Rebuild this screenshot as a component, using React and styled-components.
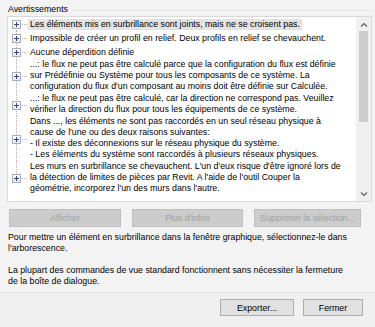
import styled, { createGlobalStyle } from "styled-components";

const GlobalStyle = createGlobalStyle`
  html, body {
    margin: 0;
    padding: 0;
    background: #f0f0f0;
  }
  body {
    font-family: "Liberation Sans", Arial, sans-serif;
    font-size: 8.8px;
    color: #000000;
  }
`;

const Dialog = styled.div`
  width: 375px;
  height: 327px;
  display: flex;
  flex-direction: column;
  background: #f0f0f0;
  overflow: hidden;
`;

const Main = styled.div`
  display: flex;
  flex-direction: column;
  padding: 2px 3px 0 7px;
  height: 293px;
  box-sizing: border-box;
  border-bottom: 1px solid #e0e0e0;
  background: #f3f3f3;
`;

const GroupTitle = styled.div`
  display: flex;
  align-items: center;
  gap: 4px;
  padding-left: 1px;
  height: 14px;
  line-height: 11px;
  &::after {
    content: "";
    flex: 1;
    border-top: 1px solid #e2e2e2;
    margin-top: 2px;
  }
`;

const ListBox = styled.div`
  display: flex;
  height: 186px;
  background: #ffffff;
  border: 1px solid #d9d9d9;
  box-sizing: border-box;
`;

const Tree = styled.div`
  flex: 1;
  padding: 0 0 0 4px;
  overflow: hidden;
`;

const Item = styled.div`
  display: flex;
  padding: ${(p) => (p.$single ? "1.5px 0" : "0 0 1px")};
`;

const Branch = styled.div`
  width: 16px;
  flex: none;
  position: relative;
  margin: ${(p) => (p.$single ? "-1.5px 0" : "0 0 -1px")};
  &::before {
    content: "";
    position: absolute;
    left: 4px;
    width: 1px;
    top: ${(p) => (p.$first ? "50%" : "0")};
    bottom: ${(p) => (p.$last ? "50%" : "0")};
    background: repeating-linear-gradient(
      to bottom,
      #b4b4b4 0 1px,
      transparent 1px 2px
    );
  }
  &::after {
    content: "";
    position: absolute;
    left: 8px;
    width: 8px;
    height: 1px;
    top: 50%;
    background: repeating-linear-gradient(
      to right,
      #b4b4b4 0 1px,
      transparent 1px 2px
    );
  }
`;

const PlusBox = styled.span`
  position: absolute;
  left: 0;
  top: 50%;
  margin-top: -4px;
  width: 7px;
  height: 7px;
  border: 1px solid #a9b0bc;
  background: linear-gradient(#ffffff, #e8e8e8);
  z-index: 1;
  &::before,
  &::after {
    content: "";
    position: absolute;
    background: #37477a;
  }
  &::before {
    left: 1px;
    right: 1px;
    top: 3px;
    height: 1px;
  }
  &::after {
    top: 1px;
    bottom: 1px;
    left: 3px;
    width: 1px;
  }
`;

const Label = styled.div`
  padding: 0 2px;
  line-height: 11px;
  white-space: nowrap;
  background: ${(p) => (p.$selected ? "#e3e3e3" : "transparent")};
`;

const ScrollBar = styled.div`
  width: 15px;
  flex: none;
  display: flex;
  flex-direction: column;
  align-items: center;
  background: #f0f0f0;
`;

const Arrow = styled.div`
  height: 14px;
  display: flex;
  align-items: center;
  justify-content: center;
`;

const Track = styled.div`
  flex: 1;
  width: 100%;
  display: flex;
  flex-direction: column;
  align-items: center;
`;

const Thumb = styled.div`
  width: 9px;
  height: 91px;
  background: #cdcdcd;
`;

const ButtonRow = styled.div`
  display: flex;
  gap: 11px;
  margin-top: 7px;
  padding-left: 2px;
`;

const DisabledButton = styled.div`
  width: ${(p) => p.$w}px;
  height: 18px;
  display: flex;
  align-items: center;
  justify-content: center;
  background: #cccccc;
  border: 1px solid #bfbfbf;
  color: #a0a0a0;
  box-sizing: border-box;
`;

const Info = styled.p`
  margin: ${(p) => p.$top} 0 0 1px;
  line-height: 11px;
  white-space: nowrap;
`;

const Footer = styled.div`
  flex: 1;
  display: flex;
  justify-content: flex-end;
  align-items: flex-start;
  gap: 9px;
  padding: 6px 12px 0 0;
`;

const Button = styled.div`
  width: ${(p) => p.$w}px;
  height: 17px;
  display: flex;
  align-items: center;
  justify-content: center;
  background: #e1e1e1;
  border: 1px solid #adadad;
  box-sizing: border-box;
`;

const warnings = [
  ["Les éléments mis en surbrillance sont joints, mais ne se croisent pas."],
  ["Impossible de créer un profil en relief. Deux profils en relief se chevauchent."],
  ["Aucune déperdition définie"],
  [
    "...: le flux ne peut pas être calculé parce que la configuration du flux est définie",
    "sur Prédéfinie ou Système pour tous les composants de ce système. La",
    "configuration du flux d'un composant au moins doit être définie sur Calculée.",
  ],
  [
    "...: le flux ne peut pas être calculé, car la direction ne correspond pas. Veuillez",
    "vérifier la direction du flux pour tous les équipements de ce système.",
  ],
  [
    "Dans ..., les éléments ne sont pas raccordés en un seul réseau physique à",
    "cause de l'une ou des deux raisons suivantes:",
    "- Il existe des déconnexions sur le réseau physique du système.",
    "- Les éléments du système sont raccordés à plusieurs réseaux physiques.",
  ],
  [
    "Les murs en surbrillance se chevauchent. L'un d'eux risque d'être ignoré lors de",
    "la détection de limites de pièces par Revit. A l'aide de l'outil Couper la",
    "géométrie, incorporez l'un des murs dans l'autre.",
  ],
];

const Chevron = ({ up }) => (
  <svg width="8" height="5" viewBox="0 0 8 5">
    <path
      d={up ? "M1 4.5 L4 1.5 L7 4.5" : "M1 0.5 L4 3.5 L7 0.5"}
      fill="none"
      stroke="#606060"
      strokeWidth="1.2"
    />
  </svg>
);

const App = () => {
  return (
    <>
      <GlobalStyle />
      <Dialog>
        <Main>
          <GroupTitle>Avertissements</GroupTitle>
          <ListBox>
            <Tree>
              {warnings.map((lines, i) => {
                const single = lines.length === 1;
                return (
                  <Item key={i} $single={single}>
                    <Branch
                      $single={single}
                      $first={i === 0}
                      $last={i === warnings.length - 1}
                    >
                      <PlusBox />
                    </Branch>
                    <Label $selected={i === 0}>
                      {lines.map((l, j) => (
                        <div key={j}>{l}</div>
                      ))}
                    </Label>
                  </Item>
                );
              })}
            </Tree>
            <ScrollBar>
              <Arrow>
                <Chevron up />
              </Arrow>
              <Track>
                <Thumb />
              </Track>
              <Arrow>
                <Chevron />
              </Arrow>
            </ScrollBar>
          </ListBox>
          <ButtonRow>
            <DisabledButton $w={112}>Afficher</DisabledButton>
            <DisabledButton $w={111}>Plus d'infos</DisabledButton>
            <DisabledButton $w={107}>Supprimer la sélection...</DisabledButton>
          </ButtonRow>
          <Info $top="5px">
            Pour mettre un élément en surbrillance dans la fenêtre graphique,
            sélectionnez-le dans
            <br />
            l'arborescence.
          </Info>
          <Info $top="11px">
            La plupart des commandes de vue standard fonctionnent sans nécessiter
            la fermeture
            <br />
            de la boîte de dialogue.
          </Info>
        </Main>
        <Footer>
          <Button $w={74}>Exporter...</Button>
          <Button $w={60}>Fermer</Button>
        </Footer>
      </Dialog>
    </>
  );
};

export default App;
